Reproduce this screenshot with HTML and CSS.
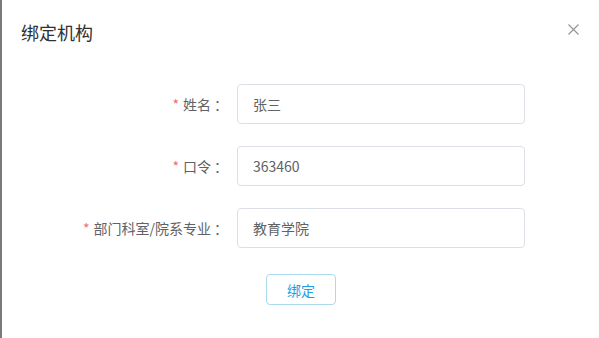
FILE: index.html
```html
<!DOCTYPE html>
<html lang="zh">
<head>
<meta charset="utf-8">
<link rel="stylesheet" href="styles.css">
</head>
<body>
<div class="dialog">
  <div class="header">
    <span class="title">绑定机构</span>
    <button class="close" aria-label="关闭">
      <svg width="11" height="11" viewBox="0 0 11 11"><path d="M0.5 0.5L10.5 10.5M10.5 0.5L0.5 10.5" stroke="#909399" stroke-width="1.1" fill="none"/></svg>
    </button>
  </div>
  <div class="body">
    <div class="row">
      <label class="label"><span class="req">*</span>姓名<span class="colon">：</span></label>
      <div class="input">张三</div>
    </div>
    <div class="row">
      <label class="label"><span class="req">*</span>口令<span class="colon">：</span></label>
      <div class="input">363460</div>
    </div>
    <div class="row">
      <label class="label"><span class="req">*</span>部门科室/院系专业<span class="colon">：</span></label>
      <div class="input">教育学院</div>
    </div>
    <div class="footer">
      <button class="btn">绑定</button>
    </div>
  </div>
</div>
</body>
</html>
```
FILE: styles.css
```css
html, body {
  margin: 0;
  padding: 0;
  background: #fff;
}
body {
  font-family: "Noto Sans CJK SC", "Microsoft YaHei", sans-serif;
  width: 599px;
  height: 338px;
  overflow: hidden;
}
.dialog {
  border-left: 2px solid #7b7b7b;
  height: 338px;
  box-sizing: border-box;
}
.header {
  display: flex;
  justify-content: space-between;
  align-items: center;
  padding: 20px 20px 10px 19px;
}
.title {
  font-size: 18px;
  line-height: 24px;
  color: #303133;
}
.close {
  border: 0;
  background: none;
  padding: 0;
  margin-right: 0;
  margin-top: -6px;
  display: flex;
}
.body {
  padding: 30px 0 0 0;
}
.row {
  display: flex;
  align-items: center;
  margin-bottom: 22px;
}
.label {
  width: 235px;
  box-sizing: border-box;
  padding-right: 12px;
  text-align: right;
  font-size: 14px;
  color: #606266;
}
.colon {
  display: inline-block;
  padding-left: 3px;
  margin-right: -3px;
}
.req {
  color: #f56c6c;
  margin-right: 4px;
}
.input {
  width: 288px;
  height: 40px;
  box-sizing: border-box;
  border: 1px solid #dcdfe6;
  border-radius: 4px;
  padding: 0 15px;
  font-size: 14px;
  line-height: 38px;
  color: #606266;
}
.footer {
  display: flex;
  justify-content: center;
  padding-left: 1px;
  padding-top: 4px;
}
.btn {
  width: 70px;
  height: 31px;
  border: 1px solid #abd9ee;
  border-radius: 4px;
  background: #fff;
  color: #1c9fe6;
  font-family: inherit;
  font-size: 14px;
  padding: 0;
}
```
